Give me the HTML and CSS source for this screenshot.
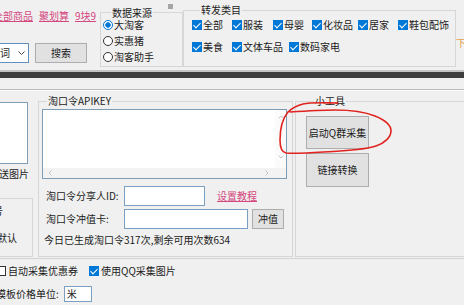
FILE: index.html
```html
<!DOCTYPE html>
<html lang="zh-CN">
<head>
<meta charset="utf-8">
<title>采集工具</title>
<link rel="stylesheet" href="styles.css">
</head>
<body>
<div class="top">
  <div class="nav">
    <div class="links">
      <a class="link">全部商品</a>
      <a class="link">聚划算</a>
      <a class="link">9块9</a>
    </div>
    <div class="search">
      <div class="combo"><span>关键词</span><svg width="7" height="4" viewBox="0 0 7 4"><path d="M0.5 0.5 L3.5 3.5 L6.5 0.5" fill="none" stroke="#444" stroke-width="1"/></svg></div>
      <div class="btn btn-search">搜索</div>
    </div>
  </div>
  <fieldset class="grp src">
    <legend class="src-legend">数据来源</legend>
    <div class="opt"><span class="rb on"></span><span>大淘客</span></div>
    <div class="opt"><span class="rb"></span><span>实惠猪</span></div>
    <div class="opt"><span class="rb"></span><span>淘客助手</span></div>
  </fieldset>
  <fieldset class="grp cat">
    <legend class="cat-legend">转发类目</legend>
    <div class="cats r1">
      <label class="opt"><span class="cb on"></span>全部</label>
      <label class="opt"><span class="cb on"></span>服装</label>
      <label class="opt"><span class="cb on"></span>母婴</label>
      <label class="opt"><span class="cb on"></span>化妆品</label>
      <label class="opt"><span class="cb on"></span>居家</label>
      <label class="opt"><span class="cb on"></span>鞋包配饰</label>
    </div>
    <div class="cats r2">
      <label class="opt"><span class="cb on"></span>美食</label>
      <label class="opt"><span class="cb on"></span>文体车品</label>
      <label class="opt"><span class="cb on"></span>数码家电</label>
    </div>
  </fieldset>
  <span class="dl">下</span>
  <span class="dot"></span>
</div>
<div class="band"></div>
<div class="main">
  <div class="stub">
    <div class="pic"></div>
    <div class="pic-label">发送图片</div>
    <div class="sub">
      <div class="sub-a">账号</div>
      <div class="sub-b">默认</div>
    </div>
  </div>
  <fieldset class="grp api">
    <legend>淘口令APIKEY</legend>
    <div class="ta">
      <div class="ta-text"></div>
      <div class="vs">
        <svg width="6" height="4" viewBox="0 0 6 4"><path d="M0.5 3.5 L3 1 L5.5 3.5" fill="none" stroke="#c4c4c4"/></svg>
        <svg width="6" height="4" viewBox="0 0 6 4"><path d="M0.5 0.5 L3 3 L5.5 0.5" fill="none" stroke="#c4c4c4"/></svg>
      </div>
      <div class="hs">
        <svg width="4" height="6" viewBox="0 0 4 6"><path d="M3.5 0.5 L1 3 L3.5 5.5" fill="none" stroke="#c4c4c4"/></svg>
        <svg width="4" height="6" viewBox="0 0 4 6"><path d="M0.5 0.5 L3 3 L0.5 5.5" fill="none" stroke="#c4c4c4"/></svg>
      </div>
      <div class="corner"></div>
    </div>
    <div class="row r-id">
      <span class="lbl">淘口令分享人ID:</span>
      <span class="inp inp-id"></span>
      <a class="link tut">设置教程</a>
    </div>
    <div class="row r-card">
      <span class="lbl">淘口令冲值卡:</span>
      <span class="inp inp-card"></span>
      <span class="btn btn-pay">冲值</span>
    </div>
    <div class="status">今日已生成淘口令317次,剩余可用次数634</div>
  </fieldset>
  <fieldset class="grp tools">
    <legend>小工具</legend>
    <div class="btn btn-tool t1">启动Q群采集</div>
    <div class="btn btn-tool t2">链接转换</div>
  </fieldset>
</div>
<div class="opts">
  <label class="opt first"><span class="cb"></span>自动采集优惠券</label>
  <label class="opt"><span class="cb on"></span>使用QQ采集图片</label>
</div>
<div class="tpl">
  <span class="tpl-lbl">模板价格单位:</span>
  <span class="inp inp-unit">米</span>
</div>
<svg class="mark" width="464" height="305" viewBox="0 0 464 305">
  <path d="M338 103 C325 103 312 102 303 104 C296 106 291 109 288 112 C283 118 280 128 280 140 C280 147 281 152 286 153 C300 154 320 152 340 151 C355 150 367 149 376 146 C385 143 391 137 391 131 C391 125 385 120 375 116 C365 112 350 110 335 110 C320 110 305 111 290 112" fill="none" stroke="#e0231e" stroke-width="1.6" stroke-linecap="round"/>
</svg>
</body>
</html>
```
FILE: styles.css
```css
* { box-sizing: border-box; }

body {
  margin: 0;
  width: 464px;
  height: 305px;
  overflow: hidden;
  position: relative;
  background: #f0f0f0;
  color: #1b1b1b;
  font: 10px/12px "Noto Sans CJK SC", "Noto Sans", sans-serif;
}

.link { color: #d4477f; text-decoration: underline; }

.btn {
  display: flex;
  align-items: center;
  justify-content: center;
  background: #e1e1e1;
  border: 1px solid #adadad;
  flex: none;
}

.grp {
  border: 1px solid #d6d6d6;
  margin: 0;
  padding: 0;
  min-width: 0;
  flex: none;
}
.grp legend { padding: 0 1px; margin-left: 8px; line-height: 12px; }

.opt { display: flex; align-items: center; gap: 1px; height: 14px; white-space: nowrap; }

.rb {
  width: 10px; height: 10px; border-radius: 50%;
  border: 1px solid #333; background: #fff; flex: none;
}
.rb.on { border-color: #0078d7; background: radial-gradient(circle, #0078d7 0 2.4px, #fff 3px); }

.cb {
  width: 10px; height: 10px; border: 1px solid #333; background: #fff; flex: none;
  display: flex; align-items: center; justify-content: center;
}
.cb.on { background: #0078d7; border-color: #0078d7; }
.cb.on::after {
  content: "";
  width: 3px; height: 6px;
  border: solid #fff; border-width: 0 1.5px 1.5px 0;
  transform: translate(0, -1px) rotate(45deg);
}

.inp { background: #fff; border: 1px solid #7b9fc2; flex: none; }

/* ---------- top ---------- */
.top { display: flex; align-items: flex-start; height: 70px; position: relative; }
.nav { margin-left: -22px; width: 122px; flex: none; }
.links { display: flex; gap: 6px; padding: 10px 0 0 15px; white-space: nowrap; }
.search { display: flex; gap: 6px; margin-top: 21px; }
.combo {
  width: 51px; height: 20px; background: #fff; border: 1px solid #5f8fbd;
  display: flex; align-items: center; justify-content: space-between;
  padding: 0 3px 0 1px; overflow: hidden; white-space: nowrap;
}
.btn-search { width: 52px; height: 20px; }

.src { width: 83px; height: 60px; margin-top: 7px; padding: 0 0 0 2px; }
.src .src-legend { line-height: 11px; }
.src .opt + .opt { margin-top: 2px; }

.cat { width: 273px; height: 64px; margin: 3px 0 0 0; padding: 1px 0 0 8px; }
.cat .cat-legend { line-height: 14px; }
.cats { display: grid; height: 14px; }
.r1 { grid-template-columns: 40px 41px 39px 46px 40px auto; }
.r2 { grid-template-columns: 40px 57px auto; margin-top: 8px; }

.dl { color: #e6a04d; margin-top: 37px; flex: none; }
.dot { position: absolute; left: 168px; top: 4px; width: 5px; height: 5px; background: #a5a5a5; }

.band { height: 8px; background: linear-gradient(#c4c4c4 0 2px, #3e3e3e 2px); }

/* ---------- main ---------- */
.main {
  display: flex; align-items: flex-start;
  height: 170px; margin-top: 11px;
  border-top: 1px solid #bcbcbc; border-bottom: 1px solid #d3d3d3;
  box-shadow: inset 0 1px #fafafa;
}
.stub { width: 33px; flex: none; }
.pic { width: 31px; height: 62px; margin: 12px 0 0 -3px; background: #fff; border: 1px solid #7d9db5; }
.pic-label { margin: 4px 0 0 -11px; white-space: nowrap; }
.sub { width: 53px; height: 59px; margin: 18px 0 0 -20px; border: 1px solid #d6d6d6; padding-top: 6px; }
.sub-a { padding-left: 2px; }
.sub-b { margin: 15px 0 0 16px; }

.api { width: 255px; height: 162px; margin: 5px 0 0 5px; }
.ta {
  width: 245px; height: 70px; margin: 2px 0 0 3px;
  background: #fff; border: 1px solid #7b9db6;
  display: grid; grid-template-columns: 1fr 11px; grid-template-rows: 1fr 10px;
}
.vs { display: flex; flex-direction: column; justify-content: space-between; align-items: center; padding: 5px 0 9px; background: #fbfbfb; }
.hs { display: flex; justify-content: space-between; align-items: center; padding: 0 6px 0 5px; background: #f3f3f3; }
.corner { background: #f3f3f3; }

.row { display: flex; align-items: center; margin-left: 7px; height: 20px; }
.lbl { width: 78px; flex: none; white-space: nowrap; }
.r-id { margin-top: 7px; }
.r-card { margin-top: 3px; }
.inp-id { width: 81px; height: 20px; }
.tut { margin-left: 12px; }
.inp-card { width: 124px; height: 20px; }
.btn-pay { width: 32px; height: 20px; margin-left: 4px; }
.status { margin: 5px 0 0 5px; white-space: nowrap; }

.tools { width: 190px; height: 162px; margin: 5px 0 0 2px; padding: 0 0 0 10px; }
.btn-tool { width: 63px; }
.t1 { height: 33px; margin-top: 9px; }
.t2 { height: 34px; margin-top: 4px; }

/* ---------- bottom ---------- */
.opts { display: flex; align-items: center; height: 14px; margin: 5px 0 0 -4px; }
.opts .opt { gap: 2px; }
.opts .first { width: 93px; }
.tpl { display: flex; align-items: center; height: 16px; margin: 8px 0 0 -4px; white-space: nowrap; }
.inp-unit { width: 28px; height: 16px; margin-left: 5px; padding-left: 2px; line-height: 14px; }

.mark { position: absolute; left: 0; top: 0; pointer-events: none; }
```
